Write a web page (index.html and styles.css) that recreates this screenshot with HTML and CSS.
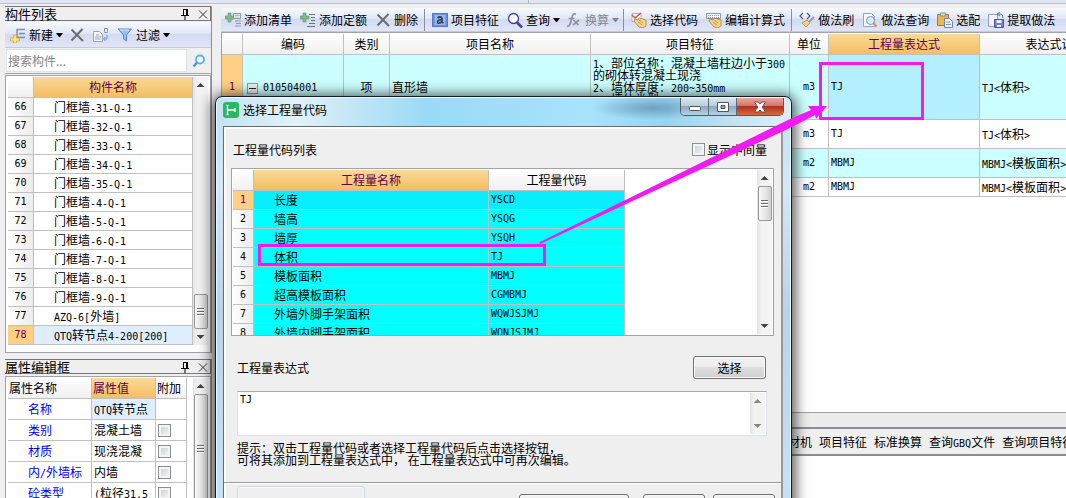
FILE: index.html
```html
<!DOCTYPE html>
<html lang="zh-CN">
<head>
<meta charset="utf-8">
<title>选择工程量代码</title>
<link rel="stylesheet" href="styles.css">
</head>
<body>
<svg class="defs" aria-hidden="true">
  <defs>
    <symbol id="pin" viewBox="0 0 12 12"><path d="M4 1.500h5M4.500 1v6M7.500 1v6M8.500 1v6M2 7.500h8M6 8v4" stroke="#000" fill="none"/></symbol>
    <symbol id="close" viewBox="0 0 12 12"><path d="M2 2.500l8 8M10 2.500l-8 8" stroke="#333" fill="none"/></symbol>
    <symbol id="cross" viewBox="0 0 16 16"><path d="M2.500 2.500L14 14M13.500 2L2.500 13.500" stroke="#6d6d6d" stroke-width="2" fill="none"/></symbol>
    <symbol id="glass" viewBox="0 0 16 16"><circle cx="6.500" cy="6.500" r="5" fill="#fff" stroke="#3c3c98" stroke-width="1.300"/><path d="M10 10.500l5 5" stroke="#3f3fa4" stroke-width="2.500"/></symbol>
    <symbol id="hand" viewBox="0 0 16 16"><path d="M4 7l3 1 1-2 7 2v6l-3 2-4-1-5-6z" fill="#f3d48b" stroke="#aa7d32" stroke-width=".8"/><path d="M8 8l4 3M7 10l4 3" stroke="#b98a38" stroke-width=".8"/></symbol>
  </defs>
</svg>
<div class="app">
  <div class="top-strip"><span class="strip-mark"></span></div>
  <div class="workspace">
    <aside class="side">
      <section class="panel">
        <h2 class="panel-title">构件列表<span class="panel-tools"><button aria-label="固定"><svg><use href="#pin"/></svg></button><button aria-label="关闭"><svg><use href="#close"/></svg></button></span></h2>
        <div class="toolbar side-bar">
          <button class="tool drop"><svg viewBox="0 0 16 16"><path d="M7 2v10M7 2.500h8M9 6.500h6M7 10.500h8" stroke="#7e92ac" stroke-width="1.500" fill="none"/><path d="M3.500 8h3v3h3v3h-3v2h-3v-2H.5v-3h3z" fill="#fbe48b" stroke="#cfa53c" stroke-width=".8"/></svg>新建<i class="caret"></i></button>
          <button class="tool" aria-label="删除构件"><svg><use href="#cross"/></svg></button>
          <button class="tool" aria-label="复制"><svg viewBox="0 0 16 16"><path d="M.5 4.500h6l3 3v7h-9z" fill="#f4f6fa" stroke="#9aa4b5"/><path d="M2 10h6M2 12h6M3 8h3" stroke="#9aa4b5"/><path d="M11.500 1.500h3v4h-3z" fill="#fff" stroke="#8c98ae"/><path d="M14 8v4h-3m1.500-2l-2 2 2 2" fill="none" stroke="#7b8fd8"/></svg></button>
          <button class="tool drop"><svg viewBox="0 0 16 16"><path d="M1 2h13.500L9.500 8v6l-3-2V8z" fill="#9cc0ee" stroke="#5684cc"/><path d="M3 3h9" stroke="#dcebfc"/></svg>过滤<i class="caret"></i></button>
        </div>
        <form class="search">
          <input class="search-input" type="text" placeholder="搜索构件..." aria-label="搜索构件">
          <button class="search-go" type="button" aria-label="搜索"><svg viewBox="0 0 14 14"><circle cx="8" cy="5.500" r="4" fill="#f5fbff" stroke="#55b0e8" stroke-width="1.800"/><path d="M5 8.500l-3.500 4" stroke="#3f97da" stroke-width="2.200"/></svg></button>
        </form>
        <div class="grid-box list-box">
          <table class="grid list-grid">
            <colgroup><col class="w-num"><col></colgroup>
            <thead><tr><th></th><th class="active">构件名称</th></tr></thead>
            <tbody>
              <tr><th>66</th><td>门框墙<span class="en">-31-Q-1</span></td></tr>
              <tr><th>67</th><td>门框墙<span class="en">-32-Q-1</span></td></tr>
              <tr><th>68</th><td>门框墙<span class="en">-33-Q-1</span></td></tr>
              <tr><th>69</th><td>门框墙<span class="en">-34-Q-1</span></td></tr>
              <tr><th>70</th><td>门框墙<span class="en">-35-Q-1</span></td></tr>
              <tr><th>71</th><td>门框墙<span class="en">-4-Q-1</span></td></tr>
              <tr><th>72</th><td>门框墙<span class="en">-5-Q-1</span></td></tr>
              <tr><th>73</th><td>门框墙<span class="en">-6-Q-1</span></td></tr>
              <tr><th>74</th><td>门框墙<span class="en">-7-Q-1</span></td></tr>
              <tr><th>75</th><td>门框墙<span class="en">-8-Q-1</span></td></tr>
              <tr><th>76</th><td>门框墙<span class="en">-9-Q-1</span></td></tr>
              <tr><th>77</th><td><span class="en">AZQ-6[</span>外墙<span class="en">]</span></td></tr>
              <tr class="current"><th>78</th><td><span class="en">QTQ</span>转节点<span class="en">4-200[200]</span></td></tr>
            </tbody>
          </table>
          <div class="scroll at-end"><i class="up"></i><i class="thumb"></i><i class="down"></i></div>
        </div>
      </section>
      <section class="panel props">
        <h2 class="panel-title">属性编辑框<span class="panel-tools"><button aria-label="固定"><svg><use href="#pin"/></svg></button><button aria-label="关闭"><svg><use href="#close"/></svg></button></span></h2>
        <div class="grid-box props-box">
          <table class="grid props-grid">
            <colgroup><col class="w-prop"><col class="w-value"><col class="w-extra"></colgroup>
            <thead><tr><th>属性名称</th><th class="active">属性值</th><th>附加</th></tr></thead>
            <tbody>
              <tr class="current"><td>名称</td><td><span class="en">QTQ</span>转节点</td><td></td></tr>
              <tr><td>类别</td><td>混凝土墙</td><td><input type="checkbox" aria-label="附加 类别"></td></tr>
              <tr><td>材质</td><td>现浇混凝</td><td><input type="checkbox" aria-label="附加 材质"></td></tr>
              <tr><td>内<span class="en">/</span>外墙标</td><td>内墙</td><td><input type="checkbox" aria-label="附加 内/外墙标"></td></tr>
              <tr><td>砼类型</td><td><span class="en">(</span>粒径<span class="en">31.5</span></td><td><input type="checkbox" aria-label="附加 砼类型"></td></tr>
            </tbody>
          </table>
          <div class="scroll tall"><i class="up"></i><i class="thumb"></i></div>
        </div>
      </section>
    </aside>
    <main class="main">
      <div class="toolbar main-bar">
        <button class="tool"><svg viewBox="0 0 16 16"><path d="M3 1h3v3h3v3H6v3H3V7H0V4h3z" fill="#7fb98a" stroke="#5b9468" stroke-width=".6"/><path d="M8.500 1.500h7v5h-7z" fill="#eef2f8" stroke="#8d99ab"/><path d="M9 3.500h6M11 2v4M13 2v4" stroke="#a8b2c2" stroke-width=".7"/><path d="M10 9h6M11 11.500h5M10 14h6" stroke="#8d99ab"/></svg>添加清单</button>
        <button class="tool"><svg viewBox="0 0 16 16"><path d="M3 1h3v3h3v3H6v3H3V7H0V4h3z" fill="#7fb98a" stroke="#5b9468" stroke-width=".6"/><path d="M9 2.500h6M11 5.500h4M11 8.500h4M9 11.500h6M7 14.500h8" stroke="#69737f"/></svg>添加定额</button>
        <button class="tool"><svg><use href="#cross"/></svg>删除</button>
        <span class="sep"></span>
        <button class="tool"><svg viewBox="0 0 16 16"><rect x=".5" y="1.500" width="15" height="13" fill="#6f96dc" stroke="#5278bf"/><rect x="3" y="3" width="10" height="10" fill="#9bb9ee"/><path d="M5.500 6Q8 4 10 6v5M10 8Q5.500 7.500 5.500 10t4.500 0l1.500 1" fill="none" stroke="#333d55" stroke-width="1.700"/></svg>项目特征</button>
        <button class="tool drop"><svg><use href="#glass"/></svg>查询<i class="caret"></i></button>
        <button class="tool drop off"><svg viewBox="0 0 16 16"><path d="M1 14q3 1 4-5l1-4q1-4 4-3M2.500 6.500h6M7.500 8l5 5M13 8l-6 5" fill="none" stroke="#8f929a" stroke-width="1.700"/></svg>换算<i class="caret"></i></button>
        <span class="sep"></span>
        <button class="tool"><svg viewBox="0 0 16 16"><path d="M1 1.500h9v8H1z" fill="#fff" stroke="#a9b0ba"/><path d="M1 3l3 3 6-5" fill="none" stroke="#d94d3f" stroke-width="1.500"/><use href="#hand"/></svg>选择代码</button>
        <button class="tool"><svg viewBox="0 0 16 16"><path d="M.5 1.500h14v5H.5z" fill="#f3f5f8" stroke="#8c98a8"/><path d="M2 3.500h11M2 5.500h11" stroke="#8c98a8" stroke-dasharray="1 1"/><use href="#hand"/></svg>编辑计算式</button>
        <span class="sep"></span>
        <button class="tool"><svg viewBox="0 0 16 16"><path d="M4 1L1 4l3 3M8 1l3 3-3 3" fill="none" stroke="#555d6c" stroke-width="1.200"/><path d="M15 5l-5 5" stroke="#8f9bab" stroke-width="2"/><path d="M8 8l3 3-4 4-4-4z" fill="#f1d284" stroke="#b58b3c" stroke-width=".8"/></svg>做法刷</button>
        <button class="tool"><svg viewBox="0 0 16 16"><path d="M1.500 1.500h8l3 3v10h-11z" fill="#f5f8fd" stroke="#93a5c4"/><circle cx="8.500" cy="8.500" r="4" fill="#d9ebfa" stroke="#7696bd"/><path d="M11.500 11.500l3 3" stroke="#d29b3d" stroke-width="2.400"/></svg>做法查询</button>
        <button class="tool"><svg viewBox="0 0 16 16"><path d="M.5 2.500h11v11H.5z" fill="#e8b84c" stroke="#a67c2c"/><path d="M3.500 1h5v3h-5z" fill="#d9dde4" stroke="#828b99"/><path d="M7.500 6.500h5l3 3v6h-8z" fill="#eef3fb" stroke="#7186a8"/><path d="M9 10h4M9 12.500h5" stroke="#7d98c7"/></svg>选配</button>
        <button class="tool"><svg viewBox="0 0 16 16"><path d="M.5 2.500h9v12h-9z" fill="#f1f4fa" stroke="#90a0ba"/><path d="M6.500 7.500h9v8h-9z" fill="#7581cb" stroke="#4a559c"/><path d="M8.500 8h5v3h-5zM9 13h4v2H9z" fill="#eef0fb"/><path d="M10 2h3q2 0 2 4M12 0l-3 2 3 2" fill="none" stroke="#5272ab"/></svg>提取做法</button>
      </div>
      <div class="bill-box">
        <table class="grid bill">
          <colgroup><col class="b-num"><col class="b-code"><col class="b-kind"><col class="b-name"><col class="b-feat"><col class="b-unit"><col class="b-expr"><col class="b-note"></colgroup>
          <thead><tr><th></th><th>编码</th><th>类别</th><th>项目名称</th><th>项目特征</th><th>单位</th><th class="active">工程量表达式</th><th>表达式说明</th></tr></thead>
          <tbody>
            <tr class="tint first"><th class="en">1</th><td><button class="toggle" aria-label="折叠"></button><span class="en">010504001</span></td><td class="mid">项</td><td>直形墙</td><td class="feature"><span class="en">1</span>、部位名称：混凝土墙柱边小于<span class="en">300</span>的砌体转混凝土现浇<br><span class="en">2</span>、墙体厚度：<span class="en">200~350mm</span><br><span class="en">3</span>、墙体类型</td><td class="mid en">m3</td><td class="en picked">TJ</td><td><span class="en">TJ&lt;</span>体积<span class="en">&gt;</span></td></tr>
            <tr class="second"><th></th><td></td><td></td><td></td><td></td><td class="mid en">m3</td><td class="en">TJ</td><td><span class="en">TJ&lt;</span>体积<span class="en">&gt;</span></td></tr>
            <tr class="tint second"><th></th><td></td><td></td><td></td><td></td><td class="mid en">m2</td><td class="en">MBMJ</td><td><span class="en">MBMJ&lt;</span>模板面积<span class="en">&gt;</span></td></tr>
            <tr><th></th><td></td><td></td><td></td><td></td><td class="mid en">m2</td><td class="en">MBMJ</td><td><span class="en">MBMJ&lt;</span>模板面积<span class="en">&gt;</span></td></tr>
          </tbody>
        </table>
      </div>
      <div class="splitter"></div>
      <nav class="tabs"><button>人材机</button><button>项目特征</button><button>标准换算</button><button>查询<span class="en">GBQ</span>文件</button><button>查询项目特征方案</button></nav>
      <div class="detail"></div>
    </main>
  </div>

  <div class="dialog" role="dialog" aria-labelledby="dlg-title">
    <header class="dlg-head">
      <svg class="dlg-icon" viewBox="0 0 16 16"><rect width="16" height="16" rx="3" fill="#27b765"/><path d="M4.500 3.500v9M4.500 8h7.500M12 6v4M3.500 3.500h2M3.500 12.500h2" stroke="#fff" stroke-width="1.400" fill="none"/></svg>
      <h1 id="dlg-title">选择工程量代码</h1>
      <div class="win-buttons">
        <button class="wb" aria-label="最小化"><svg viewBox="0 0 16 14"><rect x="2.500" y="6.500" width="11" height="4" rx="1" fill="#fff" stroke="#4d5663"/></svg></button>
        <button class="wb" aria-label="最大化"><svg viewBox="0 0 16 14"><path d="M2.500 2.500h11v9h-11zM6 5.500v3h4v-3z" fill="#fff" fill-rule="evenodd" stroke="#4d5663"/></svg></button>
        <button class="wb wb-close" aria-label="关闭"><svg viewBox="0 0 16 14"><path d="M2.500 2h3.800L8 4.200 9.700 2h3.800L10.200 7l3.300 5H9.700L8 9.800 6.300 12H2.500l3.300-5z" fill="#fff" stroke="#60474a" stroke-width=".9"/></svg></button>
      </div>
    </header>
    <div class="dlg-body">
      <div class="dlg-row list-head"><span>工程量代码列表</span><label class="check"><input type="checkbox">显示中间量</label></div>
      <div class="grid-box code-box">
        <table class="grid codes">
          <colgroup><col class="c-num"><col class="c-name"><col class="c-code"></colgroup>
          <thead><tr><th></th><th class="active">工程量名称</th><th>工程量代码</th></tr></thead>
          <tbody>
            <tr class="current"><th>1</th><td>长度</td><td class="en">YSCD</td></tr>
            <tr><th>2</th><td>墙高</td><td class="en">YSQG</td></tr>
            <tr><th>3</th><td>墙厚</td><td class="en">YSQH</td></tr>
            <tr><th>4</th><td>体积</td><td class="en">TJ</td></tr>
            <tr><th>5</th><td>模板面积</td><td class="en">MBMJ</td></tr>
            <tr><th>6</th><td>超高模板面积</td><td class="en">CGMBMJ</td></tr>
            <tr><th>7</th><td>外墙外脚手架面积</td><td class="en">WQWJSJMJ</td></tr>
            <tr><th>8</th><td>外墙内脚手架面积</td><td class="en">WQNJSJMJ</td></tr>
          </tbody>
        </table>
        <div class="scroll"><i class="up"></i><i class="thumb"></i><i class="space"></i><i class="down"></i></div>
      </div>
      <div class="dlg-row expr-head"><label for="expr">工程量表达式</label><button class="btn">选择</button></div>
      <div class="expr-box"><textarea id="expr" class="en">TJ</textarea><div class="scroll plain"><i class="up"></i><i class="space"></i><i class="down"></i></div></div>
      <p class="hint">提示：双击工程量代码或者选择工程量代码后点击选择按钮，<br>可将其添加到工程量表达式中， 在工程量表达式中可再次编辑。</p>
      <footer class="dlg-foot"><span class="status"></span><button class="btn wide" aria-label="应用"></button><button class="btn" aria-label="确定"></button><button class="btn" aria-label="取消"></button></footer>
    </div>
  </div>

  <svg class="marks" aria-hidden="true"><g fill="none" stroke="#f21af2" stroke-width="3"><path d="M820.500 63.500h102v55h-102z"/><path d="M259.500 245.500h285v19h-285z"/></g><path d="M539 242.500L790 119l21-9-3-4h19l-11 13-1-4-25 13L540 244z" fill="#f21af2"/></svg>
</div>
</body>
</html>
```
FILE: styles.css
```css
* { box-sizing: border-box; }
body {
  margin: 0;
  background: #efefef;
  color: #000;
  font: 12px/12px "Noto Sans CJK SC", sans-serif;
}
button, input, textarea {
  margin: 0;
  padding: 0;
  border: 0;
  border-radius: 0;
  background: none;
  color: inherit;
  font: inherit;
}
h1, h2, p { margin: 0; font: inherit; }
.defs { position: absolute; width: 0; height: 0; }
.en { font: 10px/12px "DejaVu Sans Mono", monospace; }
span.en { line-height: 0; }

.app {
  position: relative;
  display: flex;
  flex-direction: column;
  height: 100vh;
  overflow: hidden;
}
.top-strip {
  flex: none;
  display: flex;
  height: 4px;
  padding-left: 528px;
  background: #e0e6f5;
  border-bottom: 1px solid #bcc1cf;
}
.strip-mark { width: 1px; background: #b5bac8; }
.workspace { display: flex; flex: 1; min-height: 0; gap: 9px; }

/* side panels */
.side {
  flex: none;
  display: flex;
  flex-direction: column;
  gap: 6px;
  width: 212px;
  padding: 2px 0 0 5px;
}
.panel { flex: none; border-right: 1px solid #8d8d8d; }
.panel-title {
  display: flex;
  align-items: center;
  justify-content: space-between;
  height: 15px;
  border: 1px solid #777;
  border-left: 0;
  font-size: 13px;
}
.panel-tools { display: flex; gap: 6px; padding-right: 1px; }
.panel-tools button, .panel-tools svg { display: block; width: 12px; height: 12px; }
.toolbar {
  display: flex;
  align-items: center;
  background: linear-gradient(#f6f8fd, #e2e8f6 45%, #d3dbf0 50%, #e1e6f7);
  border-bottom: 1px solid #c6c9d8;
  overflow: hidden;
}
.side-bar { height: 26px; margin-top: 1px; padding-left: 1px; }
.tool { display: flex; flex: none; align-items: center; gap: 3px; padding: 0 4px; white-space: nowrap; }
.tool svg { width: 16px; height: 16px; }
.tool.drop { padding-right: 1px; }
.tool.off { color: #85878f; }
.caret {
  width: 7px;
  margin-right: 1px;
  border: 3px solid transparent;
  border-top: 4px solid currentColor;
  border-bottom: 0;
}
.sep { width: 1px; height: 22px; margin: 0 3px 0 2px; background: #8a8f9c; }
.search { display: flex; height: 26px; padding: 1px; border-bottom: 1px solid #a5a5a5; }
.search-input {
  flex: 1;
  min-width: 0;
  padding: 0 1px;
  background: #fff;
  border: 1px solid #dde3ec;
  font-size: 12px;
}
.search-input::placeholder { color: #858585; }
.search-go { display: grid; place-items: center; width: 23px; }
.search-go svg { width: 14px; height: 14px; }

/* tables */
.grid-box { display: flex; justify-content: space-between; background: #fff; border: 1px solid #a2a2a8; }
.grid { align-self: flex-start; border-collapse: separate; border-spacing: 0; table-layout: fixed; }
.grid th, .grid td {
  height: 19px;
  padding: 0 2px;
  border: solid #c0c0c0;
  border-width: 0 1px 1px 0;
  white-space: nowrap;
  overflow: hidden;
  text-align: left;
  font-weight: normal;
}
.grid thead th {
  height: 21px;
  background: linear-gradient(#fff, #f0f0f0);
  text-align: center;
}
.grid thead th.active { background: linear-gradient(#fbd998, #f2bf62); color: #60004f; }
.grid tbody th { background: linear-gradient(90deg, #fff, #ececec); text-align: center; }
.list-grid tbody th, .codes tbody th { font-family: "DejaVu Sans Mono", monospace; font-size: 10px; }
.grid .current th, .grid .first th { background: #ffd083; color: #60004f; }
.list-box { margin-top: 1px; padding: 1px 2px 7px; }
.list-grid { width: 186px; }
.list-grid td { padding-left: 20px; }
.list-grid .current td { background: #dfeeff; }
.w-num { width: 26px; }
.props-box { min-height: 150px; margin-top: 2px; padding: 1px 2px; }
.props-grid { width: 179px; }
.w-prop { width: 84px; }
.w-value { width: 64px; }
.w-extra { width: 31px; }
.props-grid thead th { padding: 0 1px; text-align: left; }
.props-grid td { height: 21px; }
.props-grid td:first-child { padding-left: 20px; color: #00f; }
.props-grid .current td:nth-child(2) { background: #dfeeff; }
input[type="checkbox"] {
  display: block;
  appearance: none;
  width: 13px;
  height: 13px;
  border: 1px solid #8e8f8f;
  background: linear-gradient(135deg, #c8ccd3, #f8f8f8);
  box-shadow: inset 0 0 0 2px #f4f4f4;
}

.scroll {
  display: flex;
  flex: none;
  flex-direction: column;
  align-items: center;
  width: 15px;
  background: linear-gradient(90deg, #e5e5e5, #f2f2f2 30%, #f4f4f4);
}
.up, .down { flex: none; width: 8px; height: 4px; margin: 6px 0; background: #444; }
.up { clip-path: polygon(50% 0, 100% 100%, 0 100%); }
.down { clip-path: polygon(0 0, 100% 0, 50% 100%); }
.space { flex: 1; }
.thumb {
  flex: none;
  display: grid;
  place-items: center;
  width: 14px;
  height: 35px;
  border: 1px solid #989898;
  border-radius: 2px;
  background: linear-gradient(90deg, #f8f8f8, #e8e8e8 48%, #d1d1d1);
}
.thumb::before {
  content: "";
  width: 7px;
  height: 8px;
  background: repeating-linear-gradient(#6d6d6d 0 1px, #fff 1px 2px, transparent 2px 3px);
}
.at-end .thumb { margin-top: auto; }
.tall .thumb { height: 110px; }
.plain .up, .plain .down { background: #888; }

/* bill of quantities */
.main { display: flex; flex: 1; flex-direction: column; min-width: 0; padding-top: 4px; }
.main-bar { flex: none; height: 24px; }
.bill-box {
  flex: none;
  height: 381px;
  padding-top: 1px;
  overflow: hidden;
  background: #fff;
  border: 1px solid #a2a2a8;
  border-width: 1px 0 1px 1px;
}
.bill { width: 910px; }
.b-num { width: 21px; }
.b-code { width: 101px; }
.b-kind { width: 46px; }
.b-name { width: 201px; }
.b-feat { width: 199px; }
.b-unit { width: 39px; }
.b-expr { width: 151px; }
.b-note { width: 152px; }
.bill .tint td { background: #ccffff; }
.bill .first td, .bill .first th { height: 65px; }
.bill .second td { height: 29px; }
.bill .tint .picked { background: #b3efff; }
.bill .mid { text-align: center; }
.bill .first .feature { padding-top: 2px; vertical-align: top; white-space: normal; }
.toggle {
  width: 11px;
  height: 11px;
  margin: 0 5px 0 2px;
  border: 1px solid #999;
  background: linear-gradient(#222, #222) center / 7px 1px no-repeat #eee;
  vertical-align: middle;
}
.splitter { flex: none; height: 16px; background: #ececec; border-bottom: 2px solid #8b8d94; }
.tabs {
  flex: none;
  display: flex;
  height: 27px;
  padding-left: 552px;
  overflow: hidden;
  border-bottom: 2px solid #8c8c8c;
}
.tabs button { flex: none; padding: 0 4px 0 3px; white-space: nowrap; }
.detail { flex: 1; background: #fff; }

/* dialog window */
.dialog {
  position: absolute;
  top: 96px;
  left: 215px;
  width: 577px;
  padding: 0 7px;
  border: 1px solid #151c22;
  border-bottom: 0;
  border-radius: 7px 7px 0 0;
  background: linear-gradient(#b8e4f7, #d5e7f7 90px, #b9d3ee 50%, #c9e2fb);
  box-shadow: inset 0 0 0 1px #eaf8ff, 0 2px 14px 3px rgba(0, 0, 0, .7);
}
.dlg-head {
  display: flex;
  align-items: flex-start;
  height: 28px;
  margin: 1px -6px 0;
  padding: 0 0 0 6px;
  border-radius: 6px 6px 0 0;
  background:
    radial-gradient(ellipse 60px 12px at 435px 10px, rgba(62, 110, 140, .5), transparent),
    linear-gradient(90deg, #c3e3f3, #e2f2fa 80px, #c5e7f6 130px, #9adaf6 210px, #a9e2fb 370px, #98d4f0 450px, #dcecf4 560px);
}
.dlg-icon { width: 16px; height: 16px; margin-top: 4px; }
.dlg-head h1 { margin: 6px auto 0 4px; }
.win-buttons {
  display: flex;
  height: 18px;
  margin-right: 6px;
  border: 1px solid #4d5b69;
  border-top: 0;
  border-radius: 0 0 5px 5px;
  overflow: hidden;
}
.wb {
  display: grid;
  place-items: center;
  width: 28px;
  border-right: 1px solid #596b7b;
  background: linear-gradient(#d7e5ee, #bacddc 45%, #8ea9bd 50%, #b6d2e2);
}
.wb svg { width: 16px; height: 14px; }
.wb-close { width: 46px; border: 0; background: linear-gradient(#e6aa9c, #d27767 45%, #b52f1c 50%, #d66a42); }
.dlg-body {
  margin-right: 1px;
  background: #efefef;
  border: 1px solid #626c76;
  border-right: 2px solid #999;
  border-bottom: 0;
  box-shadow: inset 2px 2px 0 #fff;
}
.dlg-row { display: flex; align-items: center; justify-content: space-between; }
.list-head { height: 41px; padding: 4px 14px 0 9px; }
.check { display: flex; align-items: center; gap: 2px; }
.code-box { height: 168px; margin: 0 7px; padding: 1px; overflow: hidden; }
.codes { width: 392px; flex: none; }
.c-num { width: 21px; }
.c-name { width: 235px; }
.c-code { width: 136px; }
.codes td { background: #00ffff; }
.codes .current td { background: #08eeff; }
.codes td:nth-child(2) { padding-left: 20px; }
.expr-head { height: 55px; padding: 8px 15px 0 13px; }
.btn {
  width: 73px;
  height: 23px;
  border: 1px solid #707070;
  border-radius: 3px;
  background: linear-gradient(#f4f4f4, #ebebeb 48%, #dddddd 50%, #cfcfcf);
  box-shadow: inset 0 0 0 1px #fafafa;
}
.expr-box {
  display: flex;
  height: 45px;
  margin: 0 14px 0 13px;
  padding: 1px;
  background: #fff;
  border: 1px solid #dfe3e8;
  border-top-color: #a8a9ad;
}
.expr-box textarea { flex: 1; padding: 1px; resize: none; outline: 0; overflow: hidden; }
.hint { padding: 6px 13px 16px; line-height: 12px; white-space: nowrap; }
.dlg-foot {
  display: flex;
  gap: 8px;
  align-items: flex-start;
  height: 40px;
  padding: 3px 6px 0 13px;
  border-top: 1px solid #999;
  box-shadow: inset 0 1px 0 #fff;
}
.dlg-foot .status { width: 128px; height: 36px; margin-right: auto; border: 1px solid #ccd8e3; border-radius: 3px; box-shadow: inset 0 0 0 1px #fafafa; }
.dlg-foot .btn { width: 62px; margin-top: 8px; }
.dlg-foot .wide { width: 110px; margin-right: 6px; }

.marks { position: absolute; top: 0; left: 0; width: 100%; height: 100%; pointer-events: none; }
```
